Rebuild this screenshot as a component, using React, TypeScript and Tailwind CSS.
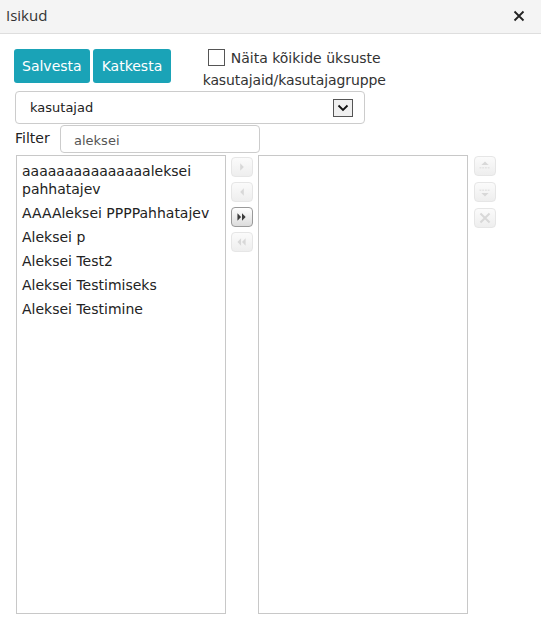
import React, { useState } from 'react';

// People picker dialog: two lists with move / order buttons between them
const people = [
  'aaaaaaaaaaaaaaaleksei pahhatajev',
  'AAAAleksei PPPPahhatajev',
  'Aleksei p',
  'Aleksei Test2',
  'Aleksei Testimiseks',
  'Aleksei Testimine',
];

type Glyph = 'right' | 'left' | 'allRight' | 'allLeft' | 'up' | 'down' | 'remove';

const GlyphIcon: React.FC<{ kind: Glyph; color: string }> = ({ kind, color }) => {
  switch (kind) {
    case 'right':
      return <path d="M9 6 L13 10 L9 14 Z" fill={color} />;
    case 'left':
      return <path d="M13 6 L9 10 L13 14 Z" fill={color} />;
    case 'allRight':
      return (
        <g fill={color}>
          <path d="M6 6 L10 10 L6 14 Z" />
          <path d="M11 6 L15 10 L11 14 Z" />
        </g>
      );
    case 'allLeft':
      return (
        <g fill={color}>
          <path d="M10 6 L6 10 L10 14 Z" />
          <path d="M15 6 L11 10 L15 14 Z" />
        </g>
      );
    case 'up':
      return (
        <g>
          <path d="M7 9 L11 5 L15 9 Z" fill={color} />
          <path d="M5 12 H17" stroke={color} strokeDasharray="2 1" />
        </g>
      );
    case 'down':
      return (
        <g>
          <path d="M5 8 H17" stroke={color} strokeDasharray="2 1" />
          <path d="M7 11 L11 15 L15 11 Z" fill={color} />
        </g>
      );
    case 'remove':
      return <path d="M6 5 L16 15 M16 5 L6 15" stroke={color} strokeWidth="2.2" />;
  }
};

const ToolButton: React.FC<{ kind: Glyph; active?: boolean }> = ({ kind, active }) => (
  <button
    className={`w-[22px] h-[20px] rounded-[4px] border flex items-center justify-center ${
      active
        ? 'border-[#9a9a9a] bg-gradient-to-b from-[#ffffff] to-[#dcdcdc]'
        : 'border-[#e6e6e6] bg-gradient-to-b from-[#fbfbfb] to-[#eeeeee]'
    }`}
  >
    <svg width="22" height="20" viewBox="0 0 22 20">
      <GlyphIcon kind={kind} color={active ? '#3c3c3c' : '#d8d8d8'} />
    </svg>
  </button>
);

export default function App() {
  const [showAll, setShowAll] = useState(false);
  const [filter, setFilter] = useState('aleksei');

  return (
    <div className="w-[541px] h-[639px] bg-white flex flex-col font-['DejaVu_Sans',sans-serif] text-[#333]">
      {/* title bar */}
      <div className="h-[34px] shrink-0 bg-[#f4f4f4] border-b border-[#dedede] flex items-center justify-between pl-[6px] pr-[16px]">
        <span className="font-['Open_Sans',sans-serif] text-[15px] text-[#333] -mt-[2px]">Isikud</span>
        <svg width="12" height="12" viewBox="0 0 12 12" className="-mt-[1px]">
          <path d="M1.5 1.5 L10.5 10.5 M10.5 1.5 L1.5 10.5" stroke="#222" strokeWidth="1.8" />
        </svg>
      </div>

      <div className="flex-1 flex flex-col pl-[14px] pt-[15px]">
        {/* actions + checkbox */}
        <div className="flex items-start">
          <button className="h-[34px] px-[8px] rounded-[3px] bg-[#1aa3b7] text-white text-[14px]">Salvesta</button>
          <button className="h-[34px] ml-[3px] px-[9px] rounded-[3px] bg-[#1aa3b7] text-white text-[14px]">Katkesta</button>
          <label className="ml-[18px] w-[210px] shrink-0 text-center text-[14px] leading-[22px] text-[#333] -mt-[2px]">
            <span
              onClick={() => setShowAll(!showAll)}
              className="inline-block align-[-3px] w-[17px] h-[17px] border border-[#555] bg-white mr-[6px]"
            >
              {showAll && (
                <svg width="15" height="15" viewBox="0 0 15 15">
                  <path d="M3 7.5 L6 10.5 L12 4" stroke="#333" strokeWidth="1.6" fill="none" />
                </svg>
              )}
            </span>
            Näita kõikide üksuste
            <br />
            <span className="tracking-[-0.1px]">kasutajaid/kasutajagruppe</span>
          </label>
        </div>

        {/* group select */}
        <div className="ml-[1px] w-[350px] h-[33px] border border-[#cccccc] rounded-[4px] flex items-center justify-between pl-[14px] pr-[11px]">
          <span className="text-[13px] text-[#222]">kasutajad</span>
          <span className="w-[20px] h-[18px] border border-[#555] bg-[#f0f0f0] flex items-center justify-center">
            <svg width="12" height="8" viewBox="0 0 12 8">
              <path d="M1.5 1.5 L6 6 L10.5 1.5" stroke="#111" strokeWidth="1.8" fill="none" />
            </svg>
          </span>
        </div>

        {/* filter */}
        <div className="flex items-center ml-[1px] mt-[1px]">
          <span className="text-[14px] text-[#222] w-[45px] -mt-[2px]">Filter</span>
          <input
            value={filter}
            onChange={(e) => setFilter(e.target.value)}
            className="w-[200px] h-[28px] border border-[#cccccc] rounded-[4px] pl-[13px] pt-[3px] text-[13px] text-[#555] outline-none"
          />
        </div>

        {/* lists */}
        <div className="flex mt-[2px] ml-[2px]">
          <ul className="w-[210px] h-[459px] border border-[#c8c8c8] py-[3px] pl-[5px] text-[14px] text-[#222]">
            {people
              .filter((p) => p.toLowerCase().includes(filter.toLowerCase()))
              .map((p) => (
                <li key={p} className="py-[3px] leading-[18px]">
                  {p}
                </li>
              ))}
          </ul>

          <div className="w-[32px] flex flex-col items-center gap-[5px] pt-[2px]">
            <ToolButton kind="right" />
            <ToolButton kind="left" />
            <ToolButton kind="allRight" active />
            <ToolButton kind="allLeft" />
          </div>

          <ul className="w-[210px] h-[459px] border border-[#c8c8c8]" />

          <div className="w-[34px] flex flex-col items-center gap-[6px] pt-[1px]">
            <ToolButton kind="up" />
            <ToolButton kind="down" />
            <ToolButton kind="remove" />
          </div>
        </div>
      </div>
    </div>
  );
}
